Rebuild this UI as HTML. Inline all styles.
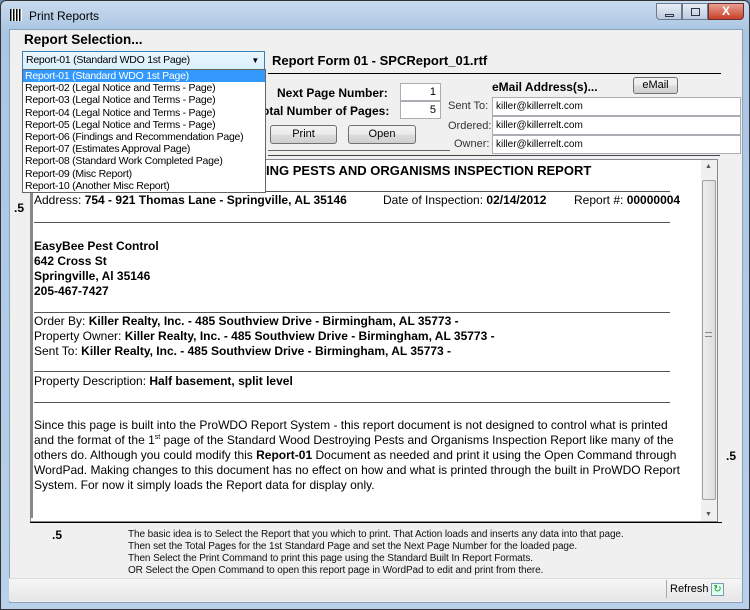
<!DOCTYPE html>
<html><head><meta charset="utf-8"><style>
*{margin:0;padding:0;box-sizing:border-box}
body{width:750px;height:610px;overflow:hidden;background:#6f8fb0;font-family:"Liberation Sans",sans-serif;position:relative}
.a{position:absolute;white-space:nowrap}
.win{position:absolute;left:0;top:0;width:750px;height:610px;background:linear-gradient(#c9dbee,#aac6e3 30px,#b9d1ea);border:1px solid #333;border-radius:6px 6px 0 0}
.client{position:absolute;left:8px;top:28px;width:734px;height:574px;background:#f0f0f0;border:1px solid #8aa0b8}
.t{font-size:11px;color:#000}
.b{font-weight:bold}
.btn{position:absolute;border:1px solid #707070;border-radius:3px;background:linear-gradient(#f2f2f2,#ebebeb 50%,#dddddd 51%,#cfcfcf);font-size:11px;text-align:center}
.tb{position:absolute;background:#fff;border:1px solid #abadb3;font-size:11px}
.dd div{height:12.2px;line-height:12px;padding-left:2px;font-size:10.5px;letter-spacing:-0.25px}
.d{font-size:12px;color:#000;line-height:15px}
.hl{position:absolute;height:1px;background:#555}
</style></head><body>
<div class="win">
<div class="a" style="left:9px;top:8px;width:12px;height:12px;background:repeating-linear-gradient(90deg,#000 0 1.5px,#fff 1.5px 3px)"></div>
<div class="a" style="left:28px;top:8px;font-size:12px;color:#000">Print Reports</div>
<div class="a" style="left:655px;top:2px;width:26px;height:17px;border:1px solid #6a7a90;border-radius:0 0 0 4px;background:linear-gradient(#e8eef6,#bccbe0)"><div style="position:absolute;left:8px;top:10px;width:9px;height:3px;border:1px solid #334"></div></div>
<div class="a" style="left:681px;top:2px;width:26px;height:17px;border:1px solid #6a7a90;background:linear-gradient(#e8eef6,#bccbe0)"><div style="position:absolute;left:8px;top:4px;width:9px;height:8px;border:1px solid #334"></div></div>
<div class="a" style="left:707px;top:2px;width:36px;height:17px;border:1px solid #6a3030;border-radius:0 0 4px 0;background:linear-gradient(#e8a090,#c8402a);color:#fff;font-size:12px;font-weight:bold;text-align:center;line-height:15px">X</div>
<div class="client">
</div>
</div>
<div class="a b" style="left:24px;top:32px;font-size:13.5px">Report Selection...</div>
<div class="a" style="left:22px;top:51px;width:243px;height:19px;border:1px solid #3c7fb1;background:linear-gradient(#eaf6fd,#d9f0fc);font-size:10.5px;letter-spacing:-0.25px;line-height:17px;padding-left:3px">Report-01 (Standard WDO 1st Page)<span style="position:absolute;right:5px;top:0;font-size:8px">▼</span></div>
<div class="a b" style="left:272px;top:53px;font-size:13px">Report Form 01 - SPCReport_01.rtf</div>
<div class="hl" style="left:268px;top:73px;width:453px;background:#000"></div>
<div class="a b" style="left:277px;top:86px;font-size:12px">Next Page Number:</div>
<div class="a b" style="left:262px;top:104px;font-size:12px">otal Number of Pages:</div>
<div class="tb" style="left:400px;top:83px;width:41px;height:18px;text-align:right;padding:2px 4px">1</div>
<div class="tb" style="left:400px;top:101px;width:41px;height:18px;text-align:right;padding:2px 4px">5</div>
<div class="btn" style="left:270px;top:125px;width:67px;height:19px;line-height:17px">Print</div>
<div class="btn" style="left:348px;top:125px;width:68px;height:19px;line-height:17px">Open</div>
<div class="hl" style="left:268px;top:150px;width:182px;background:#666"></div>
<div class="a b" style="left:492px;top:80px;font-size:12px">eMail Address(s)...</div>
<div class="btn" style="left:633px;top:77px;width:45px;height:17px;line-height:15px">eMail</div>
<div class="a t" style="left:448px;top:100px;color:#333">Sent To:</div>
<div class="a t" style="left:448px;top:120px;color:#333">Ordered:</div>
<div class="a t" style="left:454px;top:138px;color:#333">Owner:</div>
<div class="tb" style="left:492px;top:97px;width:249px;height:19px;padding:3px 3px;font-size:10px">killer@killerrelt.com</div>
<div class="tb" style="left:492px;top:116px;width:249px;height:19px;padding:3px 3px;font-size:10px">killer@killerrelt.com</div>
<div class="tb" style="left:492px;top:135px;width:249px;height:19px;padding:3px 3px;font-size:10px">killer@killerrelt.com</div>
<div class="hl" style="left:268px;top:155px;width:452px;background:#444"></div>

<div class="a" style="left:30px;top:159px;width:688px;height:363px;background:#fff;border:1px solid #828790"></div>
<div class="a" style="left:701px;top:160px;width:16px;height:361px;background:#f0f0f0"><div style="position:absolute;left:1px;top:20px;width:14px;height:320px;border:1px solid #a0a0a0;border-radius:2px;background:linear-gradient(90deg,#eee,#ddd)"></div><div style="position:absolute;left:4px;top:3px;font-size:7px;color:#555">▲</div><div style="position:absolute;left:4px;bottom:3px;font-size:7px;color:#555">▼</div><div style="position:absolute;left:4px;top:172px;width:7px;height:5px;border-top:1px solid #888;border-bottom:1px solid #888"></div></div>
<div class="a" style="left:31px;top:192px;width:2px;height:326px;background:#888"></div>
<div class="a b" style="left:266px;top:163px;font-size:13px">ING PESTS AND ORGANISMS INSPECTION REPORT</div>
<div class="hl" style="left:34px;top:191px;width:636px"></div>
<div class="a d" style="left:34px;top:193px">Address: <b>754 - 921 Thomas Lane - Springville, AL 35146</b></div>
<div class="a d" style="left:383px;top:193px">Date of Inspection: <b>02/14/2012</b></div>
<div class="a d" style="left:574px;top:193px">Report #: <b>00000004</b></div>
<div class="hl" style="left:34px;top:222px;width:636px"></div>
<div class="a d b" style="left:34px;top:239px">EasyBee Pest Control<br>642 Cross St<br>Springville, Al 35146<br>205-467-7427</div>
<div class="hl" style="left:34px;top:312px;width:636px"></div>
<div class="a d" style="left:34px;top:314px">Order By: <b>Killer Realty, Inc. - 485 Southview Drive - Birmingham, AL 35773 -</b><br>Property Owner: <b>Killer Realty, Inc. - 485 Southview Drive - Birmingham, AL 35773 -</b><br>Sent To: <b>Killer Realty, Inc. - 485 Southview Drive - Birmingham, AL 35773 -</b></div>
<div class="hl" style="left:34px;top:371px;width:636px"></div>
<div class="a d" style="left:34px;top:374px">Property Description: <b>Half basement, split level</b></div>
<div class="hl" style="left:34px;top:402px;width:636px"></div>
<div class="a d" style="left:34px;top:418px">Since this page is built into the ProWDO Report System - this report document is not designed to control what is printed<br>and the format of the 1<sup style="font-size:7px;line-height:0">st</sup> page of the Standard Wood Destroying Pests and Organisms Inspection Report like many of the<br>others do. Although you could modify this <b>Report-01</b> Document as needed and print it using the Open Command through<br>WordPad. Making changes to this document has no effect on how and what is printed through the built in ProWDO Report<br>System. For now it simply loads the Report data for display only.</div>

<div class="a b" style="left:14px;top:201px;font-size:12px">.5</div>
<div class="a b" style="left:726px;top:449px;font-size:12px">.5</div>
<div class="a b" style="left:52px;top:528px;font-size:12px">.5</div>
<div class="hl" style="left:30px;top:522px;width:692px;background:#000"></div>
<div class="a" style="left:128px;top:529px;font-size:10px;letter-spacing:-0.1px;line-height:12px;color:#111">The basic idea is to Select the Report that you which to print. That Action loads and inserts any data into that page.<br>Then set the Total Pages for the 1st Standard Page and set the Next Page Number for the loaded page.<br>Then Select the Print Command to print this page using the Standard Built In Report Formats.<br>OR Select the Open Command to open this report page in WordPad to edit and print from there.</div>
<div class="a" style="left:9px;top:578px;width:733px;height:23px;background:linear-gradient(#f6f6f6,#e6e6e6);border-top:1px solid #ddd"></div>
<div class="a" style="left:666px;top:580px;width:1px;height:18px;background:#aaa"></div>
<div class="a" style="left:670px;top:583px;font-size:11px">Refresh</div>
<div class="a" style="left:711px;top:583px;width:13px;height:13px;border:1px solid #7a9ab8;background:#dfe;color:#2a8a2a;font-size:10px;line-height:11px;text-align:center">↻</div>

<div class="a dd" style="left:22px;top:69px;width:244px;height:124px;background:#fff;border:1px solid #646464">
<div style="background:#3399ff;color:#fff">Report-01 (Standard WDO 1st Page)</div>
<div>Report-02 (Legal Notice and Terms - Page)</div>
<div>Report-03 (Legal Notice and Terms - Page)</div>
<div>Report-04 (Legal Notice and Terms - Page)</div>
<div>Report-05 (Legal Notice and Terms - Page)</div>
<div>Report-06 (Findings and Recommendation Page)</div>
<div>Report-07 (Estimates Approval Page)</div>
<div>Report-08 (Standard Work Completed Page)</div>
<div>Report-09 (Misc Report)</div>
<div>Report-10 (Another Misc Report)</div>
</div>
</body></html>
